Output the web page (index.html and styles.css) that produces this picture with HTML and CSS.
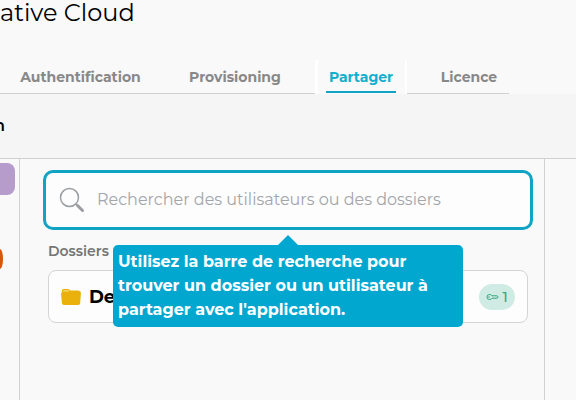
FILE: index.html
```html
<!doctype html>
<html lang="fr">
<head>
  <meta charset="utf-8">
  <title>Creative Cloud - Partager</title>
  <meta name="viewport" content="width=device-width,initial-scale=1">
  <link rel="stylesheet" href="styles.css">
</head>
<body>

  <header class="app-header">
    <h1 class="app-title">ative Cloud</h1>
    <nav class="tabs" aria-label="Configuration">
      <a class="tab tab-auth" href="#auth">Authentification</a>
      <a class="tab tab-prov" href="#provisioning">Provisioning</a>
      <a class="tab tab-active" href="#partager" aria-current="page"><span>Partager</span></a>
      <a class="tab tab-licence" href="#licence">Licence</a>
    </nav>
  </header>

  <div class="band">
    <h2 class="band-title">n</h2>
  </div>

  <div class="columns">
    <aside class="side">
      <div class="chip chip-purple"></div>
      <div class="chip chip-orange"></div>
    </aside>

    <main class="share">
      <div class="search-wrap">
        <label class="search">
          <svg class="search-icon" viewBox="0 0 26 26" fill="none" stroke="#9b9ea1" aria-hidden="true">
            <circle cx="10.5" cy="10.5" r="9" stroke-width="1.5"/>
            <path d="M17 17l2 2" stroke-width="1.5"/>
            <path d="M18.5 18.5l5 5" stroke-width="3" stroke-linecap="round"/>
          </svg>
          <input type="search" aria-label="Rechercher" aria-describedby="search-tip" placeholder="Rechercher des utilisateurs ou des dossiers">
        </label>
        <div class="tooltip" id="search-tip" role="tooltip">Utilisez la barre de recherche pour<br>trouver un dossier ou un utilisateur à<br>partager avec l'application.</div>
      </div>

      <section class="folders">
        <h3 class="folders-title">Dossiers</h3>
        <div class="folder">
          <svg class="folder-icon" viewBox="0 0 20 18" aria-hidden="true">
            <path d="M.8 5V3Q.8 1 2.800 1H7q1.500 0 2.500 1.500H17q2 0 2 2V6H.8z" fill="#eab10c"/>
            <path d="M2 3.600Q2 2.300 3.300 2.300H7.300L8.600 2.800 7.500 3.600z" fill="#f8dd86"/>
            <path d="M1.500 4.300H7.500Q8.500 4.300 9.500 3h8.500q2 0 1.900 2l-.7 10q-.1 2-2.100 2H3q-2 0-2.100-2L.1 6Q0 4.300 1.500 4.300z" fill="#eab10c"/>
          </svg>
          <span class="folder-name">De</span>
          <span class="badge">
            <svg class="key-icon" viewBox="0 0 13 8" fill="none" stroke="#35a67c" aria-hidden="true">
              <path d="M6 2.800Q5.300 1.500 3.500 1.500 1 1.500 1 4t2.500 2.500Q5.300 6.500 6 5.200h5L12.300 4 11 2.800z"/>
              <circle cx="3" cy="4" r=".3"/>
            </svg>
            1
          </span>
        </div>
      </section>
    </main>
  </div>

</body>
</html>
```
FILE: styles.css
```css
/* ---------- Tokens ---------- */
:root{
  --accent:#02a7cf;
  --accent-dark:#0fa3c4;
  --line:#cfd0d1;
  --page:#f9f9f9;
}

/* ---------- Reset ---------- */
*,*::before,*::after{box-sizing:border-box}
body{margin:0;min-height:100vh;display:flex;flex-direction:column;
     background:var(--page);color:#000;overflow:hidden;
     font-family:Montserrat,Inter,sans-serif}
h1,h2,h3{margin:0}

/* ---------- Header + tabs ---------- */
.app-title{font-size:24px;line-height:26px;height:60px;font-weight:400}
.tabs{display:flex;width:fit-content;height:34px}
.tab{display:flex;justify-content:center;align-items:center;
     border-bottom:1px solid var(--line);
     color:#888;font-size:14px;font-weight:700;text-decoration:none}
.tab-auth{width:161px}
.tab-prov{width:154px;padding-right:6px}
.tab-active{width:92px;padding:0 9px 0 8px;border:solid #fff;border-width:0 2px 0 3px;color:#12b0cd}
.tab-active span{width:100%;height:33px;line-height:34px;align-self:flex-start;text-align:center;
                 border-bottom:2px solid var(--accent-dark)}
.tab-licence{width:102px;padding-left:22px}

.band{height:65px;background:#f5f5f5;border-bottom:1px solid var(--line);
      display:flex;align-items:center}
.band-title{font-size:16px;line-height:20px;font-weight:600;width:5px;direction:rtl}

/* ---------- Columns ---------- */
.columns{flex:1;display:flex}
.side{width:20px;border-right:1px solid var(--line);padding-top:4px}
.chip-purple{width:15px;height:32px;border-radius:0 8px 8px 0;background:#b69ccb}
.chip-orange{width:3px;height:20px;margin-top:54px;border-radius:0 3px 3px 0 / 0 10px 10px 0;background:#d4570b}
.share{flex:1;margin-right:31px;padding:11px 11px 0 23px;border-right:1px solid var(--line)}

/* ---------- Search ---------- */
.search-wrap{position:relative}
.search{display:flex;align-items:center;gap:12px;height:60px;padding:0 12px 0 13px;
        background:#fdfdfe;border:3px solid var(--accent-dark);border-radius:10px}
.search-icon{width:26px;height:26px;flex:none}
.search input{flex:1;min-width:0;padding:0;border:0;outline:0;background:none;
              font:400 16px/24px Montserrat,Inter,sans-serif}
.search input::placeholder{color:#a3a6a9;opacity:1}

.tooltip{position:absolute;z-index:1;top:calc(100% + 15px);left:50%;translate:-50% 0;
         width:350px;padding:5px;border-radius:5px;background:var(--accent);
         color:#fff;font-size:16px;line-height:24px;font-weight:700;white-space:nowrap}
.tooltip::before{content:"";position:absolute;bottom:100%;left:50%;translate:-50% 0;
                 border:10px solid transparent;border-top:0;border-bottom-color:var(--accent)}

/* ---------- Folders ---------- */
.folders{padding:11px 5px 0}
.folders-title{font-size:14px;line-height:20px;font-weight:600;color:#757575}
.folder{display:flex;align-items:center;gap:8px;height:53px;margin-top:9px;padding:0 12px;
        background:#fdfdfd;border:1px solid #d3d4d4;border-radius:8px}
.folder-icon{width:20px;height:18px}
.folder-name{font-size:18px;font-weight:700}
.badge{display:flex;align-items:center;justify-content:center;gap:3px;
       width:36px;height:26px;margin-left:auto;border-radius:13px;
       background:#d0ebe3;color:#35a67c;font-size:14px;font-weight:500}
.key-icon{width:13px;height:8px}
```
